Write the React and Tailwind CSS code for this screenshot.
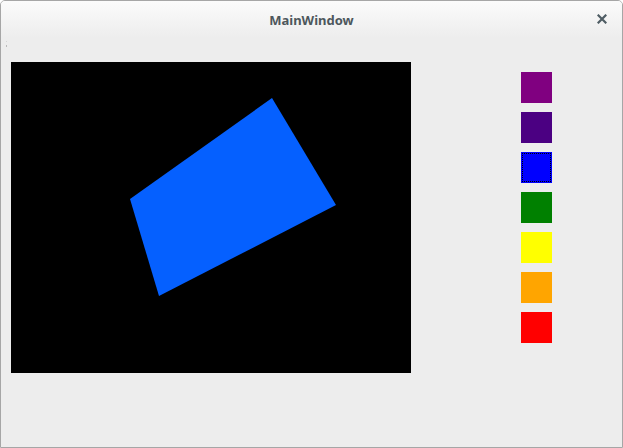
import React from 'react';

const swatches = ['#800080', '#4b0082', '#0000ff', '#008000', '#ffff00', '#ffa500', '#ff0000'];

// dotted focus rectangle, 1px dots with 1px gaps, inset 1px
const dots = [];
for (let i = 1; i <= 29; i += 2) {
  dots.push([i, 1], [i, 29], [1, i], [29, i]);
}

const Swatch = ({ color, focused }) => (
  <div className="w-[31px] h-[31px]" style={{ backgroundColor: color }}>
    {focused && (
      <svg width="31" height="31" viewBox="0 0 31 31" className="block">
        {dots.map(([x, y], k) => (
          <rect key={k} x={x} y={y} width="1" height="1" fill="#000" />
        ))}
      </svg>
    )}
  </div>
);

export default function App() {
  return (
    <div className="w-[623px] h-[448px] bg-[#ededed] border border-[#a6a6a6] rounded-t-[5px] flex flex-col overflow-hidden font-['Noto_Sans',sans-serif]">
      {/* title bar */}
      <div className="h-[37px] shrink-0 bg-gradient-to-b from-[#fbfbfb] to-[#ededed] flex items-center relative">
        <div className="flex-1 text-center text-[13px] font-bold text-[#4d575c] leading-none pt-[1px]">MainWindow</div>
        <div className="absolute right-[13px] top-[11px] w-[14px] h-[14px] flex items-center justify-center">
          <svg width="10" height="10" viewBox="0 0 10 10">
            <path d="M1.5 1.5 L8.5 8.5 M8.5 1.5 L1.5 8.5" stroke="#4f5d64" strokeWidth="2.2" strokeLinecap="square" />
          </svg>
        </div>
      </div>

      {/* toolbar handle */}
      <div className="h-[24px] shrink-0 pl-[5px] pt-[3px] flex flex-col gap-[3px]">
        <div className="w-[1px] h-[1px] bg-[#d6d6d6]" />
        <div className="w-[1px] h-[2px] bg-[#b9b9b9]" />
      </div>

      {/* central widget */}
      <div className="flex pl-[10px]">
        <div className="w-[400px] h-[311px] bg-black shrink-0">
          <svg width="400" height="311" viewBox="0 0 400 311">
            <polygon points="261,36 325,143 148,234 119,137" fill="#0560ff" />
          </svg>
        </div>
        <div className="ml-[110px] pt-[10px] flex flex-col gap-[9px]">
          {swatches.map((c, i) => (
            <Swatch key={c} color={c} focused={i === 2} />
          ))}
        </div>
      </div>
    </div>
  );
}
